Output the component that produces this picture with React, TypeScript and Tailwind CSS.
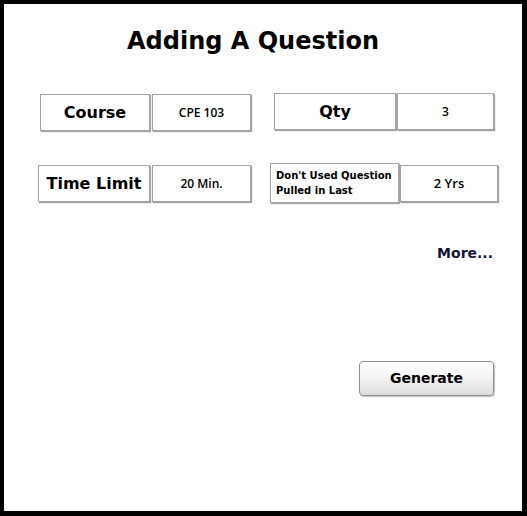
import React from "react";

function Box({ className, children }: { className: string; children: React.ReactNode }) {
  return (
    <div
      className={
        "flex items-center border border-[#a3a3a3] bg-white shadow-[1px_1px_1px_rgba(0,0,0,0.35)] text-black " +
        className
      }
    >
      {children}
    </div>
  );
}

const V = "font-['DejaVu_Sans',Verdana,sans-serif] font-bold justify-center";
const C = "font-['Open_Sans','Noto_Sans',sans-serif] font-semibold justify-center";

export default function App() {
  return (
    <div className="w-[527px] h-[516px] bg-white">
      <div className="w-[527px] h-[516px] border-black border-t-[4px] border-l-[4px] border-r-[5px] border-b-[5px] flex flex-col">
        <div className="h-[72px] flex items-center justify-center pr-[20px]">
          <h1 className="text-[24px] font-bold leading-none mt-[2px] font-['DejaVu_Sans',Verdana,sans-serif]">
            Adding A Question
          </h1>
        </div>

        <div className="flex mt-[18px] items-start">
          <Box className={"ml-[36px] w-[110px] h-[37px] text-[16px] " + V}>Course</Box>
          <Box className={"ml-[2px] w-[99px] h-[37px] text-[12px] " + C}>CPE 103</Box>
          <Box className={"ml-[23px] -mt-[1px] w-[122px] h-[37px] text-[16px] " + V}>Qty</Box>
          <Box className={"ml-[1px] -mt-[1px] w-[97px] h-[37px] text-[12px] " + C}>3</Box>
        </div>

        <div className="flex mt-[32px] items-start">
          <Box className={"ml-[34px] mt-[2px] w-[112px] h-[37px] text-[16px] " + V}>Time Limit</Box>
          <Box className={"ml-[2px] mt-[2px] w-[99px] h-[37px] text-[12px] " + C}>20 Min.</Box>
          <Box className="ml-[19px] w-[129px] h-[40px] text-[10px] font-bold pl-[5px] leading-[15px] font-['DejaVu_Sans',Verdana,sans-serif]">
            <span>
              Don't Used Question
              <br />
              Pulled in Last
            </span>
          </Box>
          <Box className={"ml-[1px] mt-[2px] w-[98px] h-[37px] text-[13px] " + C}>2 Yrs</Box>
        </div>

        <div className="flex justify-end mt-[40px] pr-[29px]">
          <span className="text-[14px] font-bold text-[#14143c] font-['DejaVu_Sans',Verdana,sans-serif]">
            More...
          </span>
        </div>

        <div className="flex justify-end mt-[97px] pr-[28px]">
          <button className="w-[135px] h-[35px] rounded-[4px] border border-[#8f8f8f] bg-gradient-to-b from-white via-[#f3f3f3] to-[#dcdcdc] shadow-[1px_1px_1px_rgba(0,0,0,0.25)] text-[14px] font-bold text-black font-['DejaVu_Sans',Verdana,sans-serif]">
            Generate
          </button>
        </div>
      </div>
    </div>
  );
}
